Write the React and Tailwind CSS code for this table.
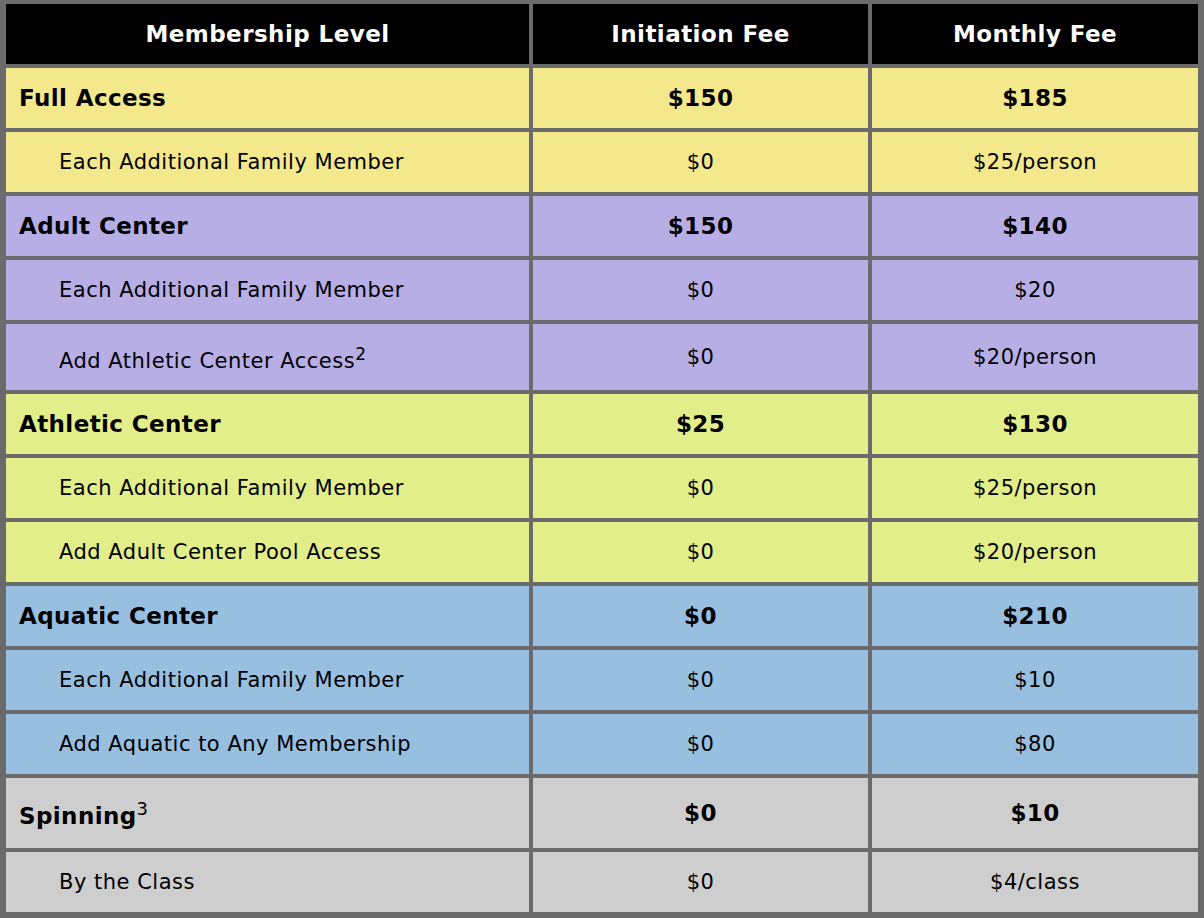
import React from 'react';

const sections = [
  {
    bg: 'bg-[#f4e88c]',
    main: { label: 'Full Access', init: '$150', monthly: '$185' },
    subs: [{ label: 'Each Additional Family Member', init: '$0', monthly: '$25/person' }],
  },
  {
    bg: 'bg-[#b7aee6]',
    main: { label: 'Adult Center', init: '$150', monthly: '$140' },
    subs: [
      { label: 'Each Additional Family Member', init: '$0', monthly: '$20' },
      { label: 'Add Athletic Center Access', sup: '2', init: '$0', monthly: '$20/person' },
    ],
  },
  {
    bg: 'bg-[#e1ee8a]',
    main: { label: 'Athletic Center', init: '$25', monthly: '$130' },
    subs: [
      { label: 'Each Additional Family Member', init: '$0', monthly: '$25/person' },
      { label: 'Add Adult Center Pool Access', init: '$0', monthly: '$20/person' },
    ],
  },
  {
    bg: 'bg-[#98bfe0]',
    main: { label: 'Aquatic Center', init: '$0', monthly: '$210' },
    subs: [
      { label: 'Each Additional Family Member', init: '$0', monthly: '$10' },
      { label: 'Add Aquatic to Any Membership', init: '$0', monthly: '$80' },
    ],
  },
  {
    bg: 'bg-[#cecece]',
    main: { label: 'Spinning', sup: '3', init: '$0', monthly: '$10' },
    subs: [{ label: 'By the Class', init: '$0', monthly: '$4/class' }],
  },
];

const bold = 'text-[23px] font-bold tracking-[0.4px] text-black';
const regular = 'text-[21px] tracking-[0.5px] text-black';

const MainRow = ({ row, bg }) => {
  const h = row.sup ? 'h-[70px]' : 'h-[60px]';
  return (
    <>
      <div className={`${bg} ${h} flex items-center pl-[13px] ${bold}`}>
        <span className={row.sup ? 'pt-[6px]' : ''}>
          {row.label}
          {row.sup && <sup className="text-[18px] font-normal tracking-normal relative -top-[9px]">{row.sup}</sup>}
        </span>
      </div>
      <div className={`${bg} ${h} flex items-center justify-center ${bold}`}>{row.init}</div>
      <div className={`${bg} ${h} flex items-center justify-center ${bold}`}>{row.monthly}</div>
    </>
  );
};

const SubRow = ({ row, bg }) => {
  const h = row.sup ? 'h-[66px]' : 'h-[60px]';
  return (
    <>
      <div className={`${bg} ${h} flex items-center pl-[53px] ${regular}`}>
        <span className={row.sup ? 'pt-[8px]' : ''}>
          {row.label}
          {row.sup && <sup className="text-[17px] tracking-normal relative -top-[8px]">{row.sup}</sup>}
        </span>
      </div>
      <div className={`${bg} ${h} flex items-center justify-center ${regular}`}>{row.init}</div>
      <div className={`${bg} ${h} flex items-center justify-center ${regular}`}>{row.monthly}</div>
    </>
  );
};

export default function App() {
  return (
    <div
      className="w-[1204px] h-[918px] bg-white"
      style={{ fontFamily: '"DejaVu Sans", Verdana, sans-serif' }}
    >
      <div className="grid grid-cols-[523px_335px_326px] gap-1 bg-[#6b6b6b] pt-1 px-[6px] pb-[6px] leading-none">
        {['Membership Level', 'Initiation Fee', 'Monthly Fee'].map((h) => (
          <div
            key={h}
            className="bg-black h-[60px] flex items-center justify-center text-white font-bold text-[23px] tracking-[0.45px]"
          >
            {h}
          </div>
        ))}
        {sections.map((s) => (
          <React.Fragment key={s.main.label}>
            <MainRow row={s.main} bg={s.bg} />
            {s.subs.map((r) => (
              <SubRow key={r.label} row={r} bg={s.bg} />
            ))}
          </React.Fragment>
        ))}
      </div>
    </div>
  );
}
